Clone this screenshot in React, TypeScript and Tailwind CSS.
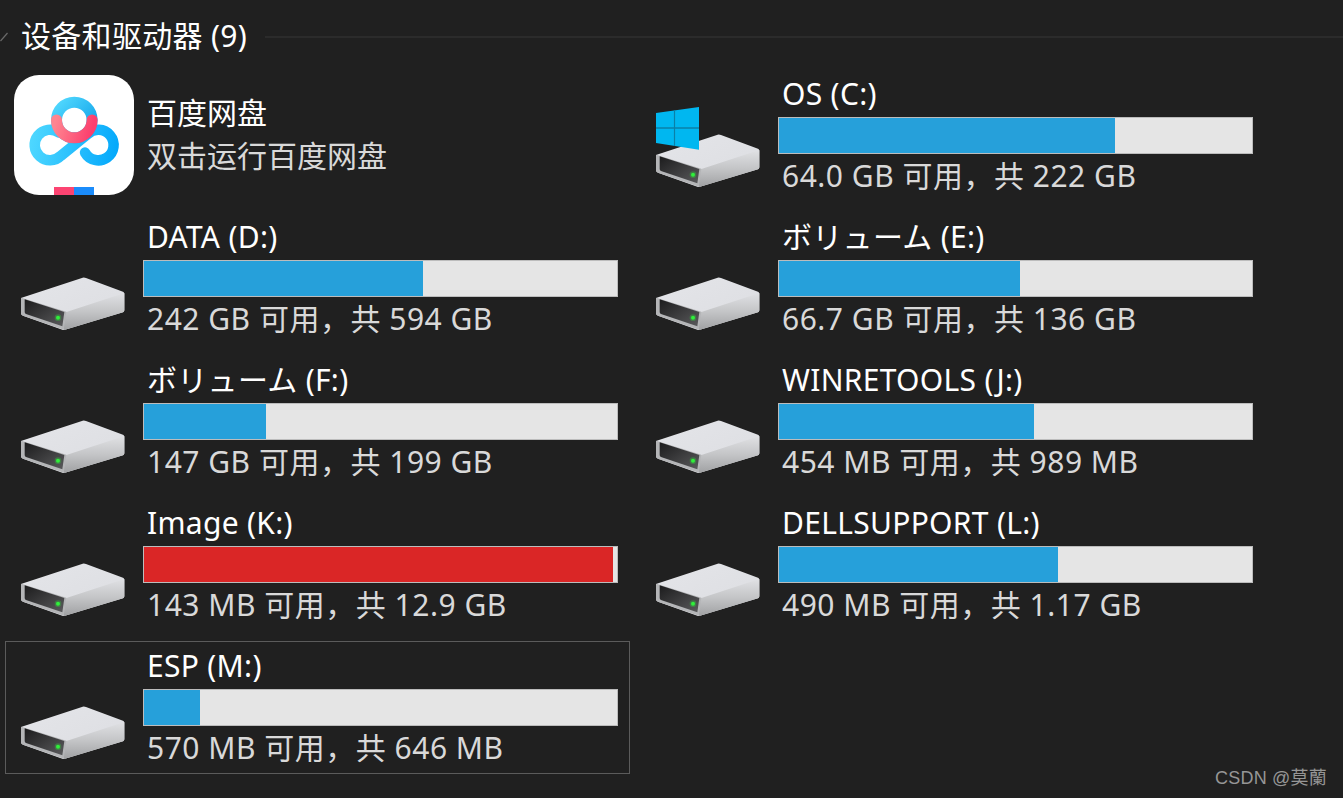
import React from 'react';

const FONT = "font-['Noto_Sans','Noto_Sans_CJK_SC',sans-serif]";

function DriveIcon() {
  return (
    <svg width="104" height="54" viewBox="0 0 312 162" className="block">
      <defs>
        <linearGradient id="driveTop" x1="0" y1="0" x2="1" y2="1">
          <stop offset="0" stopColor="#e4e5e9" />
          <stop offset="1" stopColor="#dcdde1" />
        </linearGradient>
        <linearGradient id="driveSide" x1="0" y1="0" x2="0" y2="1">
          <stop offset="0" stopColor="#e0e1e4" />
          <stop offset="0.5" stopColor="#c4c5c7" />
          <stop offset="1" stopColor="#a0a1a3" />
        </linearGradient>
        <linearGradient id="driveScreen" x1="0" y1="0" x2="1" y2="1">
          <stop offset="0" stopColor="#1c1c1d" />
          <stop offset="1" stopColor="#5a5a5c" />
        </linearGradient>
      </defs>
      <path d="M2 62 L185 2 Q190 1 195 3 L306 44 Q310 46 310 50 L310 100 Q310 104 306 106 L132 158 Q128 160 124 158 L6 116 Q0 114 0 108 L0 66 Q0 63 2 62 Z" fill="url(#driveTop)" />
      <path d="M134 106 L310 48 L310 100 Q310 104 306 106 L132 158 Q128 160 127 156 Z" fill="url(#driveSide)" />
      <path d="M1 62 L136 104 L128 158 L6 116 Q0 114 0 108 L0 66 Z" fill="#b4b5b7" />
      <path d="M11 67 L130 105 L124 148 L15 111 Q11 109 11 105 Z" fill="url(#driveScreen)" />
      <circle cx="111" cy="122" r="10" fill="#2fe03a" opacity="0.3" />
      <circle cx="111" cy="122" r="6" fill="#2ff03a" />
    </svg>
  );
}

function WindowsDriveIcon() {
  return (
    <div className="relative">
      <DriveIcon />
      {/* logo sits on top of the drive */}
      <svg width="44" height="44" viewBox="0 0 44 44" className="absolute left-0 top-[-27px]">
        <path d="M0 6 L43 0 L43 42.7 L0 36 Z" fill="#00b7f0" />
        <path d="M18.5 3 L18.5 39" stroke="#0a80a8" strokeWidth="1.2" />
        <path d="M0 21 L43 21" stroke="#0a80a8" strokeWidth="1.4" />
      </svg>
    </div>
  );
}

function BaiduIcon() {
  return (
    <svg width="120" height="120" viewBox="0 0 120 120" className="block">
      <defs>
        <linearGradient id="bdBlue" x1="16" y1="60" x2="104" y2="75" gradientUnits="userSpaceOnUse">
          <stop offset="0" stopColor="#4fd8ff" />
          <stop offset="1" stopColor="#04a8fb" />
        </linearGradient>
        <linearGradient id="bdTop" x1="42" y1="24" x2="78" y2="60" gradientUnits="userSpaceOnUse">
          <stop offset="0" stopColor="#55dbff" />
          <stop offset="1" stopColor="#0c9fe8" />
        </linearGradient>
        <linearGradient id="bdRed" x1="42" y1="45" x2="78" y2="55" gradientUnits="userSpaceOnUse">
          <stop offset="0" stopColor="#ff8590" />
          <stop offset="1" stopColor="#fb3f6e" />
        </linearGradient>
        <clipPath id="bdCard">
          <rect x="0" y="0" width="120" height="120" rx="25" />
        </clipPath>
      </defs>
      <rect x="0" y="0" width="120" height="120" rx="25" fill="#ffffff" />
      <path
        d="M44.8 57.5 A15.3 15.3 0 1 0 46.8 80.8 L73.5 59.2 A15.3 15.3 0 1 1 71 77.6"
        fill="none"
        stroke="url(#bdBlue)"
        strokeWidth="10.5"
        strokeLinecap="round"
        strokeLinejoin="round"
      />
      <circle cx="60.3" cy="45" r="17.8" fill="none" stroke="url(#bdTop)" strokeWidth="11" />
      <path d="M42.5 45 A17.8 17.8 0 0 0 78.1 45" fill="none" stroke="url(#bdRed)" strokeWidth="11" strokeLinecap="round" />
      <g clipPath="url(#bdCard)">
        <rect x="40" y="112" width="20" height="8" fill="#fc4472" />
        <rect x="60" y="112" width="20" height="8" fill="#1b8cfb" />
      </g>
    </svg>
  );
}

interface Drive {
  name: string;
  info: string;
  used: number;
  full?: boolean;
  windows?: boolean;
  selected?: boolean;
}

const drives: Drive[] = [
  { name: 'OS (C:)', info: '64.0 GB 可用\uFF0C共 222 GB', used: 71, windows: true },
  { name: 'DATA (D:)', info: '242 GB 可用\uFF0C共 594 GB', used: 59 },
  { name: 'ボリューム (E:)', info: '66.7 GB 可用\uFF0C共 136 GB', used: 51 },
  { name: 'ボリューム (F:)', info: '147 GB 可用\uFF0C共 199 GB', used: 25.8 },
  { name: 'WINRETOOLS (J:)', info: '454 MB 可用\uFF0C共 989 MB', used: 54 },
  { name: 'Image (K:)', info: '143 MB 可用\uFF0C共 12.9 GB', used: 99.2, full: true },
  { name: 'DELLSUPPORT (L:)', info: '490 MB 可用\uFF0C共 1.17 GB', used: 59 },
  { name: 'ESP (M:)', info: '570 MB 可用\uFF0C共 646 MB', used: 11.8, selected: true },
];

function DriveTile({ drive }: { drive: Drive }) {
  return (
    <div className={`h-[133px] flex border ${drive.selected ? 'border-[#5b5b5b]' : 'border-transparent'}`}>
      <div className="w-[137px] shrink-0 flex items-end pb-[13px] pl-[15px]">
        {drive.windows ? <WindowsDriveIcon /> : <DriveIcon />}
      </div>
      <div className="w-[475px] flex flex-col">
        <div className="h-[47px] pl-[4px] text-[30px] leading-[47px] tracking-[0.3px] text-white whitespace-nowrap">{drive.name}</div>
        <div className="h-[37px] border border-[#bcbcbc] bg-[#e5e5e5]">
          <div
            className={`h-full ${drive.full ? 'bg-[#da2626]' : 'bg-[#26a0da]'}`}
            style={{ width: `${drive.used}%` }}
          />
        </div>
        <div className="pl-[4px] text-[30px] leading-[44px] tracking-[0.5px] text-[#d9d9d9] whitespace-nowrap">{drive.info}</div>
      </div>
    </div>
  );
}

export default function App() {
  return (
    <div className={`relative w-[1343px] h-[798px] overflow-hidden bg-[#202020] ${FONT}`}>
      <div className="h-[69px] flex items-start">
        <svg width="8" height="12" viewBox="0 0 8 12" className="mt-[30px] shrink-0">
          <path d="M0.5 11 L7.5 3" stroke="#6a6a6a" strokeWidth="1.2" fill="none" />
        </svg>
        <div className="ml-[13px] mt-[13px] text-[30px] leading-[46px] tracking-[0.3px] text-white whitespace-nowrap">设备和驱动器 (9)</div>
        <div className="ml-[18px] mt-[36px] h-[2px] flex-1 bg-[#2b2b2b]" />
      </div>
      <div className="grid grid-cols-[625px_625px] gap-x-[10px] gap-y-[10px] pl-[5px]">
        <div className="h-[133px] flex items-start pt-[6px] pl-[9px]">
          <BaiduIcon />
          <div className="ml-[13px] mt-[16px]">
            <div className="text-[30px] leading-[44px] text-white whitespace-nowrap">百度网盘</div>
            <div className="text-[30px] leading-[42px] text-[#d9d9d9] whitespace-nowrap">双击运行百度网盘</div>
          </div>
        </div>
        {drives.map((d) => (
          <DriveTile key={d.name} drive={d} />
        ))}
      </div>
      {/* watermark */}
      <div className="absolute right-[16px] bottom-[8px] text-[18px] leading-[24px] tracking-[0.2px] text-[#969696] font-['Liberation_Sans','Noto_Sans_CJK_SC',sans-serif]">CSDN @莫蘭</div>
    </div>
  );
}
